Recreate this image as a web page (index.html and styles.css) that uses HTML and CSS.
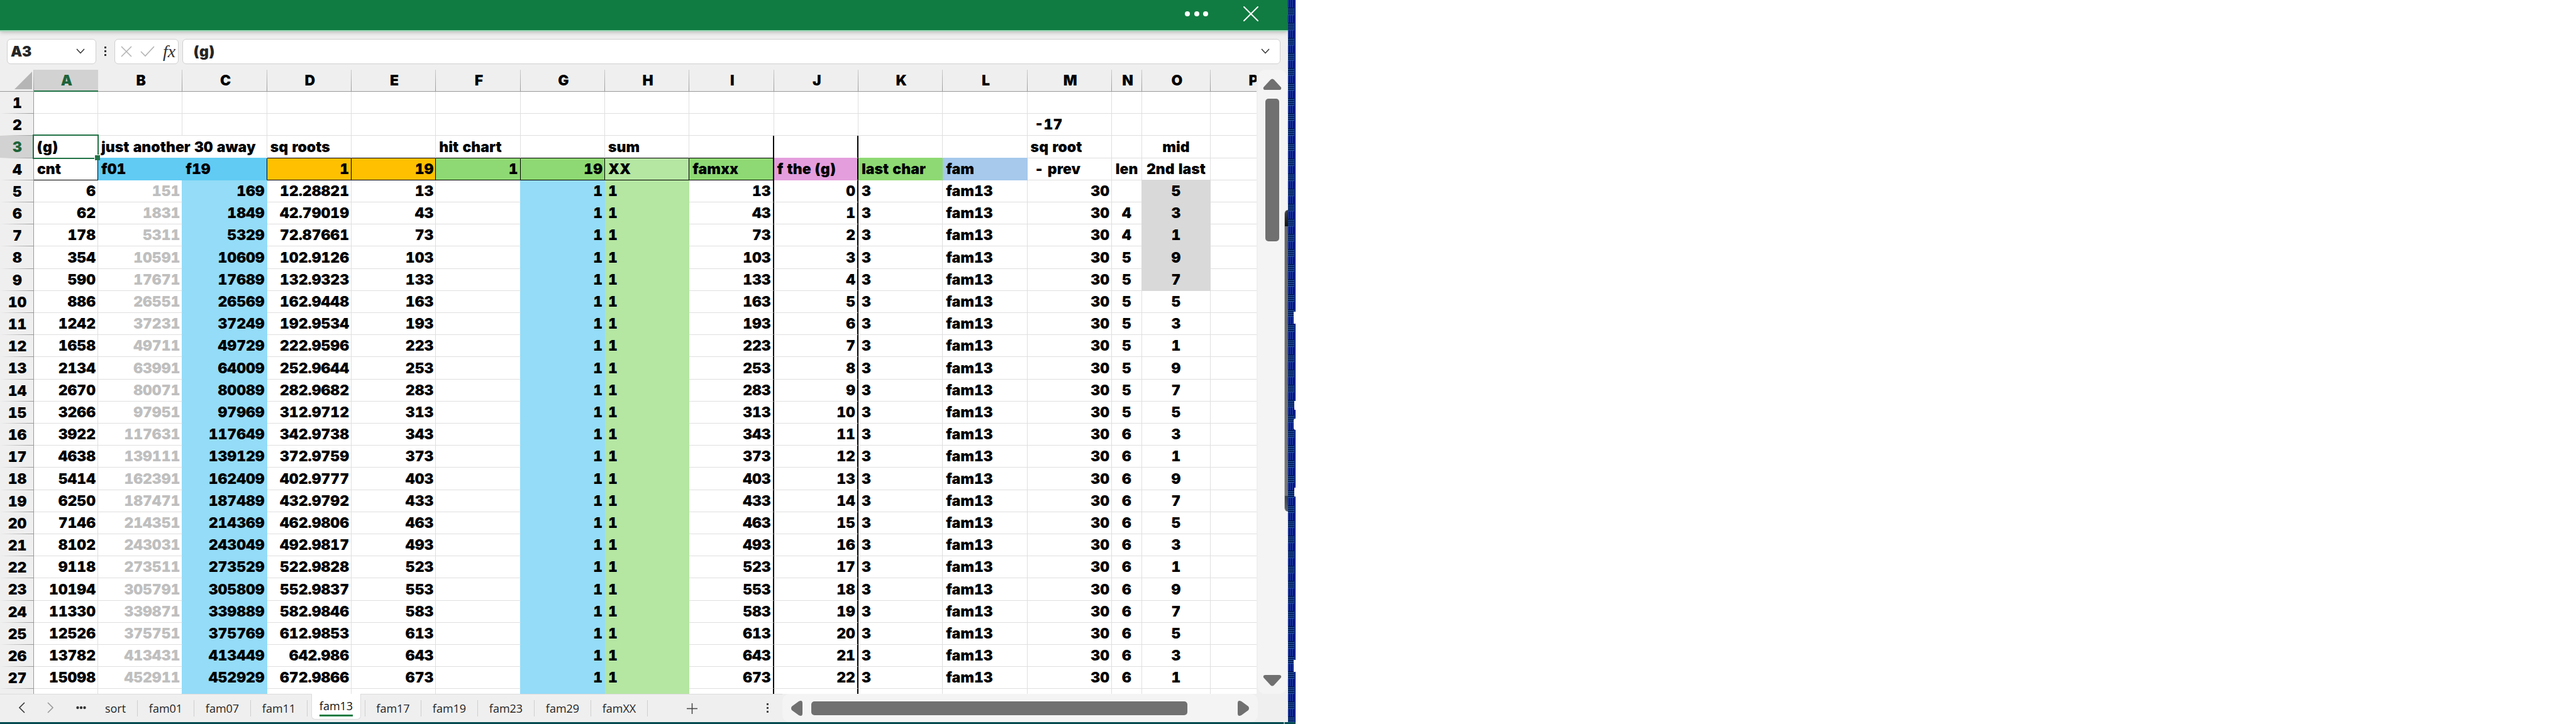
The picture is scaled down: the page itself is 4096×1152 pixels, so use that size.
FILE: index.html
```html
<!DOCTYPE html>
<html lang="en">
<head>
<meta charset="utf-8">
<title>fam13</title>
<link rel="stylesheet" href="styles.css">
</head>
<body>
<div class="screen">
  <main class="app">
    <header class="titlebar">
      <button class="plain" aria-label="More options"><svg width="38" height="8"><g fill="#fff"><circle cx="4" cy="4" r="4"/><circle cx="19" cy="4" r="4"/><circle cx="33" cy="4" r="4"/></g></svg></button>
      <button class="plain" aria-label="Close"><svg width="26" height="26"><path d="M2 2L24 24M24 2L2 24" stroke="#fff" stroke-width="2" stroke-linecap="round"/></svg></button>
    </header>

    <div class="formula-row">
      <div class="box name-box">
        <input class="field" aria-label="Name box" value="A3">
        <button class="plain" aria-label="Open name list"><svg width="14" height="9"><path d="M1 1L7 7.500L13 1" fill="none" stroke="#333" stroke-width="1.500"/></svg></button>
      </div>
      <svg class="grip" width="4" height="15"><path d="M0 0h3v3H0zM0 6h3v3H0zM0 12h3v3H0z" fill="#333"/></svg>
      <div class="box actions">
        <button class="plain" aria-label="Cancel"><svg width="18" height="18"><path d="M1 1L17 17M17 1L1 17" stroke="#b3b3b3" stroke-width="1.600"/></svg></button>
        <button class="plain" aria-label="Enter"><svg width="23" height="18"><path d="M1 9L8 16L22 1" fill="none" stroke="#b3b3b3" stroke-width="1.600"/></svg></button>
        <button class="plain fx" aria-label="Insert function">fx</button>
      </div>
      <div class="box formula-box">
        <input class="field" aria-label="Formula" value="(g)">
        <button class="plain" aria-label="Expand formula bar"><svg width="14" height="9"><path d="M1 1L7 7.500L13 1" fill="none" stroke="#333" stroke-width="1.500"/></svg></button>
      </div>
    </div>

    <div class="sheet-area">
      <div class="sheet">
        <table class="grid">
          <colgroup>
            <col class="w-head"><col class="w-a"><col><col><col><col><col><col><col><col><col><col><col><col><col class="w-n"><col class="w-o"><col class="w-p">
          </colgroup>
          <thead>
            <tr>
              <th class="corner"><svg width="28" height="28"><path d="M28 0V28H0z" fill="#b5b5b5"/></svg></th>
              <th class="active">A</th><th>B</th><th>C</th><th>D</th><th>E</th><th>F</th><th>G</th><th>H</th><th>I</th><th>J</th><th>K</th><th>L</th><th>M</th><th>N</th><th>O</th><th>P</th>
            </tr>
          </thead>
          <tbody class="top">
            <tr><th>1</th><td></td><td></td><td></td><td></td><td></td><td></td><td></td><td></td><td></td><td></td><td></td><td></td><td></td><td></td><td></td><td></td></tr>
            <tr><th>2</th><td></td><td></td><td></td><td></td><td></td><td></td><td></td><td></td><td></td><td></td><td></td><td></td><td>&nbsp;-17</td><td></td><td></td><td></td></tr>
            <tr>
              <th class="active">3</th><td class="selected">(g)</td><td colspan="2" class="over-sky">just another 30 away</td><td class="over-line">sq roots</td><td class="over-line"></td><td class="over-line">hit chart</td><td class="over-line"></td><td class="over-line">sum</td><td class="over-line thick"></td><td class="over-pink thick"></td><td class="over-green"></td><td class="over-blue"></td><td>sq root</td><td></td><td class="mid">mid</td><td></td>
            </tr>
            <tr>
              <th>4</th><td class="lined">cnt</td><td class="sky">f01</td><td class="sky last">f19</td><td class="lined orange num">1</td><td class="lined orange num">19</td><td class="lined green num">1</td><td class="lined green num">19</td><td class="lined mint">XX</td><td class="lined green thick">famxx</td><td class="pink thick">f the (g)</td><td class="green">last char</td><td class="blue">fam</td><td>&nbsp;- prev</td><td class="mid">len</td><td class="mid over-grey">2nd last</td><td></td>
            </tr>
          </tbody>
          <tbody class="data" id="data"></tbody>
        </table>
      </div>
      <div class="vscroll">
        <svg width="30" height="18"><path d="M12 2Q15-1 18 2L29 14Q30 18 26 18H4Q0 18 1 14z" fill="#707070"/></svg>
        <div class="vthumb"></div>
        <svg class="down" width="30" height="18"><path d="M12 16Q15 19 18 16L29 4Q30 0 26 0H4Q0 0 1 4z" fill="#707070"/></svg>
      </div>
    </div>

    <footer class="bottom">
      <nav class="tabs" aria-label="Sheets">
        <div class="tab-nav">
          <button class="plain" aria-label="Previous sheets"><svg width="11" height="18"><path d="M10 1L2 9L10 17" fill="none" stroke="#333" stroke-width="1.600"/></svg></button>
          <button class="plain" aria-label="Next sheets"><svg width="11" height="18"><path d="M1 1L9 9L1 17" fill="none" stroke="#999" stroke-width="1.600"/></svg></button>
          <button class="plain" aria-label="All sheets"><svg width="16" height="6"><g fill="#333"><circle cx="2.500" cy="3" r="2.200"/><circle cx="8" cy="3" r="2.200"/><circle cx="13.500" cy="3" r="2.200"/></g></svg></button>
        </div>
        <button class="tab short">sort</button><button class="tab">fam01</button><button class="tab">fam07</button><button class="tab">fam11</button><button class="tab current"><span>fam13</span></button><button class="tab">fam17</button><button class="tab">fam19</button><button class="tab">fam23</button><button class="tab">fam29</button><button class="tab">famXX</button>
        <button class="plain add" aria-label="New sheet"><svg width="17" height="17"><path d="M8.500 0V17M0 8.500H17" stroke="#444" stroke-width="1.500"/></svg></button>
        <svg class="tab-grip" width="4" height="16"><path d="M0 0h3v3H0zM0 6h3v3H0zM0 12h3v3H0z" fill="#444"/></svg>
      </nav>
      <div class="hscroll">
        <svg width="18" height="24"><path d="M1 9Q-1 12 1 15L12 23Q18 26 18 20V4Q18-2 12 1z" fill="#707070"/></svg>
        <div class="hthumb"></div>
        <svg class="right" width="18" height="24"><path d="M17 9Q19 12 17 15L6 23Q0 26 0 20V4Q0-2 6 1z" fill="#707070"/></svg>
      </div>
    </footer>
    <div class="handle"></div>
  </main>
  <aside class="desktop">
    <i class="label l1"></i><i class="label l2"></i><i class="label round"></i><i class="label l3"></i><i class="label l4"></i>
  </aside>
  <div class="taskbar"></div>
</div>
<script src="sheet.js"></script>
</body>
</html>
```
FILE: styles.css
```css
* { box-sizing: border-box; }
body { margin: 0; background: #fff; color: #000; }
svg { display: block; flex: none; }

.screen {
  display: grid;
  grid-template-columns: 50% 12px;
  grid-template-rows: 1fr 3px;
  height: 100vh;
  overflow: hidden;
}
.app {
  position: relative;
  display: flex;
  flex-direction: column;
  min-width: 0;
  min-height: 0;
  background: #efefef;
  font: 900 23px/28px Inter, "Liberation Sans", sans-serif;
  font-feature-settings: "tnum";
}
.plain { display: flex; align-items: center; padding: 0; border: 0; background: none; flex: none; }

.titlebar {
  display: flex;
  flex: none;
  justify-content: flex-end;
  gap: 54px;
  height: 50px;
  padding: 0 46px 4px 0;
  background: #107c41;
  border-bottom: 2px solid #a0d8b9;
  box-shadow: 0 1px 7px #b0b0b0;
}

.formula-row { display: flex; flex: none; align-items: center; height: 61px; padding: 2px 12px 0 11px; }
.box {
  display: flex;
  align-items: center;
  height: 40px;
  background: #fff;
  border: 1px solid #d0d0d0;
  border-radius: 6px;
}
.field {
  flex: 1;
  min-width: 0;
  padding: 0;
  border: 0;
  outline: 0;
  background: none;
  font: inherit;
  color: #252525;
}
.name-box { width: 142px; padding: 0 17px 0 5px; }
.grip { margin: 0 12px 0 13px; }
.actions { width: 102px; padding-left: 9px; gap: 13px; }
.fx { font: italic 28px/28px "Liberation Serif", serif; color: #333; }
.formula-box { flex: 1; margin-left: 6px; padding: 0 16px 0 17px; }

.sheet-area { display: flex; flex: 1; min-height: 0; padding-right: 2px; }
.sheet { flex: 1; overflow: hidden; }
.grid { table-layout: fixed; width: calc(100% + 61px); border-collapse: separate; border-spacing: 0; }
.w-head { width: 54px; }
.w-a { width: 102px; }
.w-n { width: 48px; }
.w-o { width: 109px; }
.w-p { width: 134px; }
.grid th, .grid td { height: 35px; padding: 0 3px 0 5px; white-space: nowrap; line-height: 28px; font-weight: 900; }
tbody.top tr:nth-child(3) > *, tbody.data tr:nth-child(5n+4) > * { height: 36px; }

thead th {
  border-bottom: 1px solid #999;
  background: linear-gradient(#ccc, #999) right / 1px 100% no-repeat;
}
thead .active { background: #d2d2d2; color: #1e6339; border-bottom: 2px solid #217346; }
.grid thead .corner { padding: 0 3px 0 23px; }
tbody th {
  background: linear-gradient(90deg, #efefef, #999) bottom / 100% 1px no-repeat;
  border-right: 1px solid #999;
}
tbody th.active { background-color: #d2d2d2; color: #1e6339; }

.grid td { background: #fff; border: solid #dfdfdf; border-width: 0 1px 1px 0; text-align: left; }
.grid .num { text-align: right; }
.grid .mid { text-align: center; padding: 0; }
.grid td.sky { background: #61cbf3; border-color: #61cbf3; }
.grid td.last { border-right-color: #000; }
.grid td.orange { background: #ffc000; }
.grid td.green { background: #8ed973; border-color: #8ed973; }
.grid td.mint { background: #b5e6a2; }
.grid td.pink { background: #e49edd; border-color: #e49edd; }
.grid td.blue { background: #a6c9ec; border-color: #a6c9ec; }
.grid td.lined { border-color: #000; }
.grid td.over-sky { border-bottom-color: #61cbf3; }
.grid td.over-line { border-bottom-color: #000; }
.grid td.over-pink { border-bottom-color: #e49edd; }
.grid td.over-green { border-bottom-color: #8ed973; }
.grid td.over-blue { border-bottom-color: #a6c9ec; }
.grid td.over-grey { border-bottom-color: #d9d9d9; }
.grid td.thick { border-right: 2px solid #000; }

.selected { position: relative; }
.selected::before { content: ""; position: absolute; inset: -2px; border: 2px solid #217346; z-index: 1; }
.selected::after {
  content: "";
  position: absolute;
  right: -4px;
  bottom: -4px;
  width: 8px;
  height: 8px;
  background: #217346;
  border: solid #fff;
  border-width: 1px 0 0 1px;
  z-index: 2;
}

.data .faint { color: #bfbfbf; border-right-color: #94dcf8; }
.data .aqua { background: #94dcf8; border-color: #94dcf8; }
.data .pale { background: #b5e6a2; border-color: #b5e6a2; }
.data .before-aqua { border-right-color: #94dcf8; }
.data .edge { border-right-color: #d9d9d9; }
.data .grey { background: #d9d9d9; border-color: #d9d9d9; }

.vscroll {
  display: flex;
  flex: none;
  flex-direction: column;
  align-items: center;
  width: 46px;
  margin-left: 2px;
  padding: 14px 0 12px;
  background: #f4f4f4;
  border-radius: 12px;
}
.vthumb { width: 22px; height: 227px; margin-top: 14px; border-radius: 5px; background: #707070; }
.down { margin-top: auto; }

.bottom { display: flex; flex: none; height: 45px; padding-right: 48px; }
.tabs { display: flex; flex: 1; border-top: 1px solid #dcdcdc; }
.tab-nav { display: flex; align-items: center; gap: 35px; width: 149px; padding: 0 0 2px 29px; }
.tab {
  width: 90px;
  margin: 9px 0;
  padding: 0;
  border: solid #cfcfcf;
  border-width: 0 1px 0 0;
  background: none;
  color: #252525;
  font: 18px/22px "Open Sans", "Noto Sans", sans-serif;
}
.tab.short { width: 70px; }
.tab.current {
  position: relative;
  width: 79px;
  margin: -1px 6px 4px;
  padding: 4px 0 0;
  border: 1px solid #dcdcdc;
  border-top: 0;
  border-radius: 0 0 6px 6px;
  background: #fff;
  color: #111;
}
.current span { display: inline-block; padding-bottom: 3px; border-bottom: 3px solid #107c41; }
.current + .tab { border-left-width: 1px; }
.add { margin-left: 62px; }
.tab-grip { align-self: center; margin: 0 21px 0 auto; }
.hscroll { display: flex; align-items: center; width: 756px; padding: 0 14px; border-radius: 12px; background: #f4f4f4; }
.hthumb { flex: none; width: 598px; height: 22px; margin-left: 14px; border-radius: 5px; background: #707070; }
.right { margin-left: auto; }

.handle {
  position: absolute;
  right: 0;
  top: 334px;
  width: 6px;
  height: 480px;
  border-left: 1px solid #bbb;
  border-radius: 6px 0 0 6px;
  background: linear-gradient(#444, #111 26px, #666 26px, #777 455px, #3c424a 455px, #59616b);
}

/* basket-weave wallpaper: upright strands, then level strands, every 24px */
.desktop {
  position: relative;
  background:
    linear-gradient(#1c3f96, #1c3f96) 10px 0 / 1px 100% no-repeat,
    linear-gradient(#000080, #000080) 11px 0 / 1px 100% no-repeat,
    linear-gradient(transparent 12px, #001a5c 12px 14px, #2f60a8 14px 15px, #001a5c 15px 17px, #2f60a8 17px 18px, #001a5c 18px 20px, #2f60a8 20px 21px, #001a5c 21px 23px, #2f60a8 23px) 0 0 / 100% 24px,
    repeating-linear-gradient(90deg, #000080 0 1px, #2f60a8 1px 2px, #000080 2px 3px);
}
.label { position: absolute; right: 0; width: 3px; background: #fff; }
.l1 { top: 496px; height: 19px; }
.l2 { top: 638px; height: 14px; width: 2px; }
.round { top: 666px; height: 18px; border-radius: 4px 0 0 4px; }
.l3 { top: 776px; height: 14px; width: 2px; }
.l4 { top: 1050px; height: 19px; }
.taskbar { grid-column: 1 / 3; background: linear-gradient(90deg, #004b50 2041px, #7aa 2041px 2043px, #004b50 2043px); }
```
FILE: sheet.js
```js
// Each data row is built from its root r = 13, 43, 73, ...
const body = document.getElementById('data');
const FIRST = 5, LAST = 27;

function addRow(number, cells) {
  const tr = document.createElement('tr');
  const th = document.createElement('th');
  th.textContent = number;
  tr.append(th);
  for (const [text, cls] of cells) {
    const td = document.createElement('td');
    td.textContent = text;
    td.className = cls;
    tr.append(td);
  }
  body.append(tr);
}

function cellsFor(i, blank) {
  const r = 13 + 30 * i, sq = r * r, low = sq - 18;
  const early = i < 5;
  const cells = [
    [(sq + 11) / 30, 'num'],
    [low, 'num faint'],
    [sq, 'num aqua'],
    [Number(Math.sqrt(low).toPrecision(7)), 'num'],
    [r, 'num'],
    ['', 'before-aqua'],
    [1, 'num aqua'],
    [1, 'pale'],
    [r, 'num thick'],
    [i, 'num thick'],
    [3, ''],
    ['fam13', ''],
    [30, 'num'],
    [i ? String(sq).length : '', early ? 'mid edge' : 'mid'],
    [String(low).slice(-2, -1), early ? 'mid grey' : 'mid'],
    ['', '']
  ];
  return blank ? cells.map(c => ['', c[1]]) : cells;
}

for (let n = FIRST; n <= LAST; n++) addRow(n, cellsFor(n - FIRST, false));
addRow('', cellsFor(LAST - FIRST + 1, true));
```
